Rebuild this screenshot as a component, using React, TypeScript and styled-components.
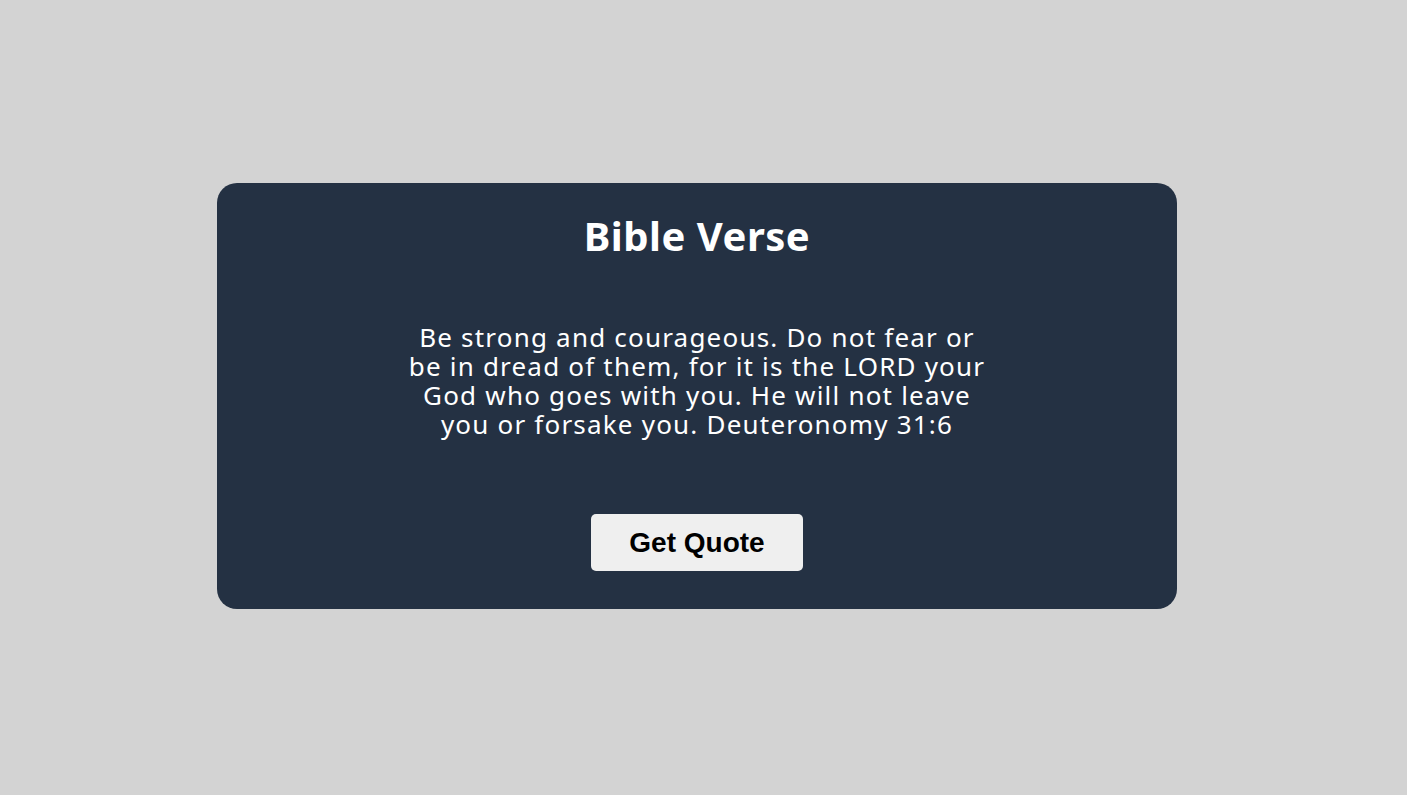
import React from "react";
import styled, { createGlobalStyle } from "styled-components";

const GlobalStyle = createGlobalStyle`
  html, body {
    margin: 0;
    padding: 0;
    background: #d3d3d3;
    font-family: "Noto Sans", "Open Sans", sans-serif;
  }
`;

const Page = styled.main`
  min-height: 795px;
  display: flex;
  align-items: flex-start;
  justify-content: center;
  padding: 183px 13px 0 0;
  box-sizing: border-box;
`;

const Card = styled.section`
  width: 960px;
  height: 426px;
  box-sizing: border-box;
  background: #243143;
  border-radius: 20px;
  display: flex;
  flex-direction: column;
  align-items: center;
  padding: 29px 0 0;
  color: #ffffff;
`;

const Title = styled.h1`
  margin: 0;
  font-size: 40px;
  line-height: 48px;
  font-weight: 700;
  letter-spacing: 0.5px;
`;

const Quote = styled.p`
  margin: 63px 0 0;
  width: 590px;
  text-align: center;
  font-size: 26px;
  line-height: 29px;
  font-weight: 400;
  letter-spacing: 1.2px;
`;

const Button = styled.button`
  margin-top: 75px;
  width: 212px;
  height: 57px;
  border: none;
  border-radius: 5px;
  background: #efefef;
  color: #000;
  font-family: "Liberation Sans", Arial, sans-serif;
  font-weight: 700;
  font-size: 28px;
  cursor: pointer;
`;

export default function App() {
  return (
    <>
      <GlobalStyle />
      <Page>
        <Card>
          <Title>Bible Verse</Title>
          <Quote>
            Be strong and courageous. Do not fear or be in dread of them, for it
            is the LORD your God who goes with you. He will not leave you or
            forsake you. Deuteronomy 31:6
          </Quote>
          <Button>Get Quote</Button>
        </Card>
      </Page>
    </>
  );
}
